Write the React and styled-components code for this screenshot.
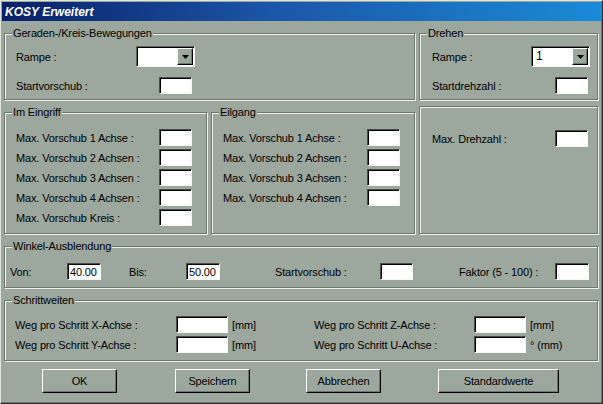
import React from "react";
import styled, { createGlobalStyle } from "styled-components";

const bg = "#9ca89e";
const shade = "#6c786e";
const light = "#eef2ee";

const GlobalStyle = createGlobalStyle`
  html, body {
    margin: 0;
    padding: 0;
    background: ${bg};
  }
  body {
    font-family: "Liberation Sans", Arial, sans-serif;
    font-size: 11px;
    letter-spacing: -0.15px;
    color: #000;
  }
`;

const Window = styled.div`
  box-sizing: border-box;
  width: 603px;
  height: 404px;
  background: ${bg};
  border: 1px solid;
  border-color: #dfe5df #2e2e2e #2e2e2e #dfe5df;
  box-shadow: inset -1px -1px 0 ${shade};
  padding: 1px 1px 0 1px;
  display: flex;
  flex-direction: column;
`;

const TitleBar = styled.div`
  height: 19px;
  flex: none;
  display: flex;
  align-items: center;
  padding-left: 3px;
  background: linear-gradient(to right, #0a2068 0%, #1b56a8 45%, #1a8ad8 100%);
  color: #fff;
  font-weight: bold;
  font-style: italic;
  font-size: 12px;
  letter-spacing: 0;
`;

const Content = styled.div`
  display: flex;
  flex-direction: column;
  gap: 6px;
  padding: 6px 0 0 2px;
`;

const Row = styled.div`
  display: flex;
  gap: 4px;
`;

const Group = styled.fieldset`
  box-sizing: border-box;
  margin: 0;
  padding: 0;
  min-width: 0;
  width: ${(p) => p.$w}px;
  height: ${(p) => p.$h}px;
  border: 1px solid ${shade};
  box-shadow: inset 1px 1px 0 ${light}, 1px 1px 0 ${light};
`;

const Legend = styled.legend`
  margin-left: 7px;
  padding: 0 1px;
  line-height: 13px;
  font-size: 11px;
  background: ${bg};
`;

const Body = styled.div`
  display: flex;
  flex-direction: column;
  gap: ${(p) => p.$gap ?? 3}px;
  padding: ${(p) => p.$pt}px 0 0 ${(p) => p.$pl}px;
`;

const Line = styled.div`
  display: flex;
  align-items: center;
  height: ${(p) => p.$h ?? 17}px;
`;

const Label = styled.span`
  flex: none;
  width: ${(p) => (p.$w ? `${p.$w}px` : "auto")};
  margin-left: ${(p) => p.$ml ?? 0}px;
  white-space: nowrap;
`;

const Field = styled.input`
  box-sizing: border-box;
  flex: none;
  width: ${(p) => p.$w ?? 33}px;
  height: 17px;
  margin: 0;
  padding: 0 2px;
  font: 11px "Liberation Sans", Arial, sans-serif;
  letter-spacing: -0.15px;
  color: #000;
  background: #fff;
  border: 1px solid;
  border-color: #4a4a4a #f6f6f6 #f6f6f6 #4a4a4a;
  box-shadow: inset 1px 1px 0 #000;
  outline: none;
`;

const Combo = styled.div`
  box-sizing: border-box;
  flex: none;
  width: 59px;
  height: 21px;
  display: flex;
  align-items: stretch;
  padding: 1px;
  background: #fff;
  border: 1px solid;
  border-color: #5a655b #f4f4f4 #f4f4f4 #5a655b;
  box-shadow: inset 1px 1px 0 #000;
`;

const ComboText = styled.span`
  flex: 1;
  padding-left: 3px;
  font-size: 12px;
  line-height: 17px;
`;

const DropButton = styled.span`
  box-sizing: border-box;
  width: 16px;
  display: flex;
  align-items: center;
  justify-content: center;
  background: ${bg};
  border: 1px solid;
  border-color: #fff #000 #000 #fff;
  box-shadow: inset -1px -1px 0 ${shade};
`;

const Unit = styled.span`
  flex: none;
  width: ${(p) => (p.$w ? `${p.$w}px` : "auto")};
  margin-left: 4px;
  white-space: nowrap;
`;

const ButtonRow = styled.div`
  display: flex;
  padding-left: 40px;
  margin-top: 8px;
`;

const Button = styled.button`
  box-sizing: border-box;
  flex: none;
  width: ${(p) => p.$w ?? 75}px;
  height: 24px;
  margin: 0 0 0 ${(p) => p.$ml ?? 0}px;
  padding: 0;
  background: ${bg};
  font: 11px "Liberation Sans", Arial, sans-serif;
  letter-spacing: -0.15px;
  color: #000;
  border: 1px solid;
  border-color: #fff #000 #000 #fff;
  box-shadow: inset -1px -1px 0 ${shade};
`;

const ComboBox = ({ value = "" }) => (
  <Combo>
    <ComboText>{value}</ComboText>
    <DropButton>
      <svg width="7" height="4" viewBox="0 0 7 4">
        <path d="M0 0h7L3.5 4z" fill="#000" />
      </svg>
    </DropButton>
  </Combo>
);

const eingriff = [
  "Max. Vorschub 1 Achse :",
  "Max. Vorschub 2 Achsen :",
  "Max. Vorschub 3 Achsen :",
  "Max. Vorschub 4 Achsen :",
  "Max. Vorschub Kreis :",
];

const eilgang = eingriff.slice(0, 4);

export default function App() {
  return (
    <>
      <GlobalStyle />
      <Window>
        <TitleBar>KOSY Erweitert</TitleBar>
        <Content>
          <Row>
            <Group $w={411} $h={73}>
              <Legend>Geraden-/Kreis-Bewegungen</Legend>
              <Body $pt={6} $pl={11} $gap={10}>
                <Line $h={21}>
                  <Label $w={120}>Rampe :</Label>
                  <ComboBox />
                </Line>
                <Line>
                  <Label $w={143}>Startvorschub :</Label>
                  <Field readOnly value="" />
                </Line>
              </Body>
            </Group>
            <Group $w={179} $h={73}>
              <Legend>Drehen</Legend>
              <Body $pt={6} $pl={12} $gap={10}>
                <Line $h={21}>
                  <Label $w={99}>Rampe :</Label>
                  <ComboBox value="1" />
                </Line>
                <Line>
                  <Label $w={123}>Startdrehzahl :</Label>
                  <Field readOnly value="" />
                </Line>
              </Body>
            </Group>
          </Row>

          <Row>
            <Group $w={203} $h={128}>
              <Legend>Im Eingriff</Legend>
              <Body $pt={10} $pl={11}>
                {eingriff.map((t) => (
                  <Line key={t}>
                    <Label $w={143}>{t}</Label>
                    <Field readOnly value="" />
                  </Line>
                ))}
              </Body>
            </Group>
            <Group $w={204} $h={128}>
              <Legend>Eilgang</Legend>
              <Body $pt={10} $pl={11}>
                {eilgang.map((t) => (
                  <Line key={t}>
                    <Label $w={144}>{t}</Label>
                    <Field readOnly value="" />
                  </Line>
                ))}
              </Body>
            </Group>
            <Group $w={179} $h={128}>
              <Body $pt={23} $pl={12}>
                <Line>
                  <Label $w={123}>Max. Drehzahl :</Label>
                  <Field readOnly value="" />
                </Line>
              </Body>
            </Group>
          </Row>

          <Group $w={594} $h={48}>
            <Legend>Winkel-Ausblendung</Legend>
            <Body $pt={10} $pl={5}>
              <Line>
                <Label $w={57}>Von:</Label>
                <Field $w={34} readOnly value="40.00" />
                <Label $w={57} $ml={28}>Bis:</Label>
                <Field $w={34} readOnly value="50.00" />
                <Label $w={105} $ml={55}>Startvorschub :</Label>
                <Field readOnly value="" />
                <Label $w={96} $ml={46}>Faktor (5 - 100) :</Label>
                <Field $w={34} readOnly value="" />
              </Line>
            </Body>
          </Group>

          <Group $w={594} $h={67}>
            <Legend>Schrittweiten</Legend>
            <Body $pt={9} $pl={10}>
              <Line>
                <Label $w={161}>Weg pro Schritt X-Achse :</Label>
                <Field $w={52} readOnly value="" />
                <Unit $w={82}>[mm]</Unit>
                <Label $w={160}>Weg pro Schritt Z-Achse :</Label>
                <Field $w={52} readOnly value="" />
                <Unit>[mm]</Unit>
              </Line>
              <Line>
                <Label $w={161}>Weg pro Schritt Y-Achse :</Label>
                <Field $w={52} readOnly value="" />
                <Unit $w={82}>[mm]</Unit>
                <Label $w={160}>Weg pro Schritt U-Achse :</Label>
                <Field $w={52} readOnly value="" />
                <Unit>° (mm)</Unit>
              </Line>
            </Body>
          </Group>
        </Content>

        <ButtonRow>
          <Button>OK</Button>
          <Button $ml={58}>Speichern</Button>
          <Button $ml={56}>Abbrechen</Button>
          <Button $ml={57} $w={121}>Standardwerte</Button>
        </ButtonRow>
      </Window>
    </>
  );
}
